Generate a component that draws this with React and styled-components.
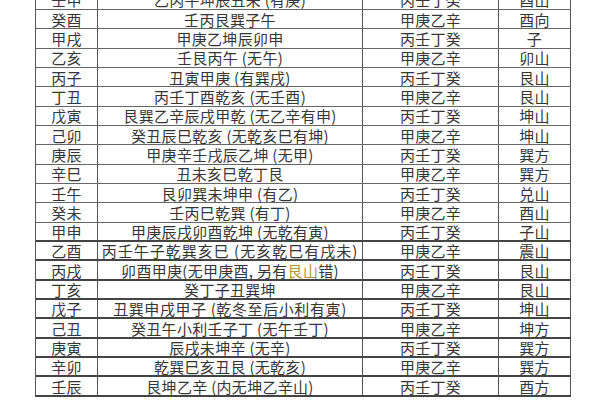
import React from 'react';
import styled, { createGlobalStyle } from 'styled-components';

const GlobalStyle = createGlobalStyle`
  html, body {
    margin: 0;
    padding: 0;
    background: #ffffff;
    overflow: hidden;
  }
  body {
    font-family: "Noto Sans CJK SC", "Noto Sans CJK TC", sans-serif;
    color: #333;
  }
`;

const Page = styled.div`
  width: 600px;
  height: 400px;
  overflow: hidden;
  background: #fff;
`;

const Table = styled.div`
  margin: -9.4px 0 0 35px;
  width: 535px;
  border-left: 1px solid #555;
`;

const Row = styled.div`
  display: grid;
  grid-template-columns: 62px 265px 136px 72px;
  height: 19.35px;
  box-sizing: border-box;
  border-bottom: ${(p) => (p.$thick ? '2px solid #444' : '1px solid #666')};
`;

const Cell = styled.div`
  display: flex;
  align-items: center;
  justify-content: center;
  border-right: 1px solid #555;
  font-size: 15px;
  line-height: 15px;
  letter-spacing: ${(p) => p.$spacing || '0.3px'};
  color: #363636;
  white-space: nowrap;
`;

const Mark = styled.span`
  color: #b8923a;
`;

const rows = [
  ['壬申', '乙丙午坤辰丑未 (有庚)', '丙壬丁癸', '酉山'],
  ['癸酉', '壬丙艮巽子午', '甲庚乙辛', '酉向'],
  ['甲戌', '甲庚乙坤辰卯申', '丙壬丁癸', '子'],
  ['乙亥', '壬艮丙午 (无午)', '甲庚乙辛', '卯山'],
  ['丙子', '丑寅甲庚 (有巽戌)', '丙壬丁癸', '艮山'],
  ['丁丑', '丙壬丁酉乾亥 (无壬酉)', '甲庚乙辛', '艮山'],
  ['戊寅', '艮巽乙辛辰戌甲乾 (无乙辛有申)', '丙壬丁癸', '坤山'],
  ['己卯', '癸丑辰巳乾亥 (无乾亥巳有坤)', '甲庚乙辛', '坤山'],
  ['庚辰', '甲庚辛壬戌辰乙坤 (无甲)', '丙壬丁癸', '巽方'],
  ['辛巳', '丑未亥巳乾丁艮', '甲庚乙辛', '巽方'],
  ['壬午', '艮卯巽未坤申 (有乙)', '丙壬丁癸', '兑山'],
  ['癸未', '壬丙巳乾巽 (有丁)', '甲庚乙辛', '酉山'],
  ['甲申', '甲庚辰戌卯酉乾坤 (无乾有寅)', '丙壬丁癸', '子山'],
  ['乙酉', '丙壬午子乾巽亥巳 (无亥乾巳有戌未)', '甲庚乙辛', '震山', '1px'],
  ['丙戌', 'mark', '丙壬丁癸', '艮山'],
  ['丁亥', '癸丁子丑巽坤', '甲庚乙辛', '艮山'],
  ['戊子', '丑巽申戌甲子 (乾冬至后小利有寅)', '丙壬丁癸', '坤山', '0.6px'],
  ['己丑', '癸丑午小利壬子丁 (无午壬丁)', '甲庚乙辛', '坤方'],
  ['庚寅', '辰戌未坤辛 (无辛)', '丙壬丁癸', '巽方'],
  ['辛卯', '乾巽巳亥丑艮 (无乾亥)', '甲庚乙辛', '巽方'],
  ['壬辰', '艮坤乙辛 (内无坤乙辛山)', '丙壬丁癸', '酉方'],
];

function App() {
  return (
    <Page>
      <GlobalStyle />
      <Table>
        {rows.map(([year, shan, avoid, dir, spacing], i) => (
          <Row key={year} $thick={i >= 12}>
            <Cell>{year}</Cell>
            <Cell $spacing={spacing}>
              {shan === 'mark' ? (
                <span>
                  卯酉甲庚(无甲庚酉, 另有<Mark>艮山</Mark>错)
                </span>
              ) : (
                shan
              )}
            </Cell>
            <Cell>{avoid}</Cell>
            <Cell>{dir}</Cell>
          </Row>
        ))}
      </Table>
    </Page>
  );
}

export default App;
